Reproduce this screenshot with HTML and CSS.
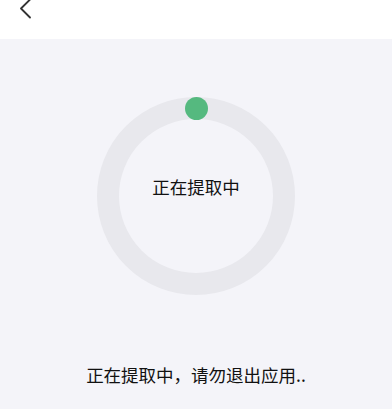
FILE: index.html
```html
<!DOCTYPE html>
<html lang="zh">
<head>
<meta charset="utf-8">
<link rel="stylesheet" href="styles.css">
</head>
<body>
<header class="header">
  <svg class="back" width="14" height="20" viewBox="0 0 14 20"><path d="M11 -0.5 L2 8.5 L11 17.5" fill="none" stroke="#333" stroke-width="1.8" stroke-linecap="round" stroke-linejoin="round"/></svg>
</header>
<main class="main">
  <div class="ring">
    <span class="dot"></span>
    <span class="ring-text">正在提取中</span>
  </div>
  <p class="hint">正在提取中，请勿退出应用..</p>
</main>
</body>
</html>
```
FILE: styles.css
```css
html, body {
  margin: 0;
  padding: 0;
  background: #f4f4f9;
  font-family: "Noto Sans CJK SC", "Noto Sans", sans-serif;
  color: #111;
}
.header {
  height: 39px;
  background: #fff;
  display: flex;
  align-items: flex-start;
  padding-left: 19px;
}
.back {
  display: block;
}
.main {
  display: flex;
  flex-direction: column;
  align-items: center;
  padding-top: 58px;
}
.ring {
  position: relative;
  width: 198px;
  height: 198px;
  box-sizing: border-box;
  border: 22px solid #e8e8ed;
  border-radius: 50%;
  display: flex;
  align-items: center;
  justify-content: center;
  padding-bottom: 18px;
}
.dot {
  position: absolute;
  top: -22px;
  left: 50%;
  width: 23px;
  height: 23px;
  margin-left: -11px;
  margin-top: -0.5px;
  border-radius: 50%;
  background: #55b97f;
}
.ring-text {
  font-size: 17.5px;
  line-height: 24px;
}
.hint {
  margin: 68px 0 0;
  font-size: 17.5px;
  line-height: 24px;
}
```
